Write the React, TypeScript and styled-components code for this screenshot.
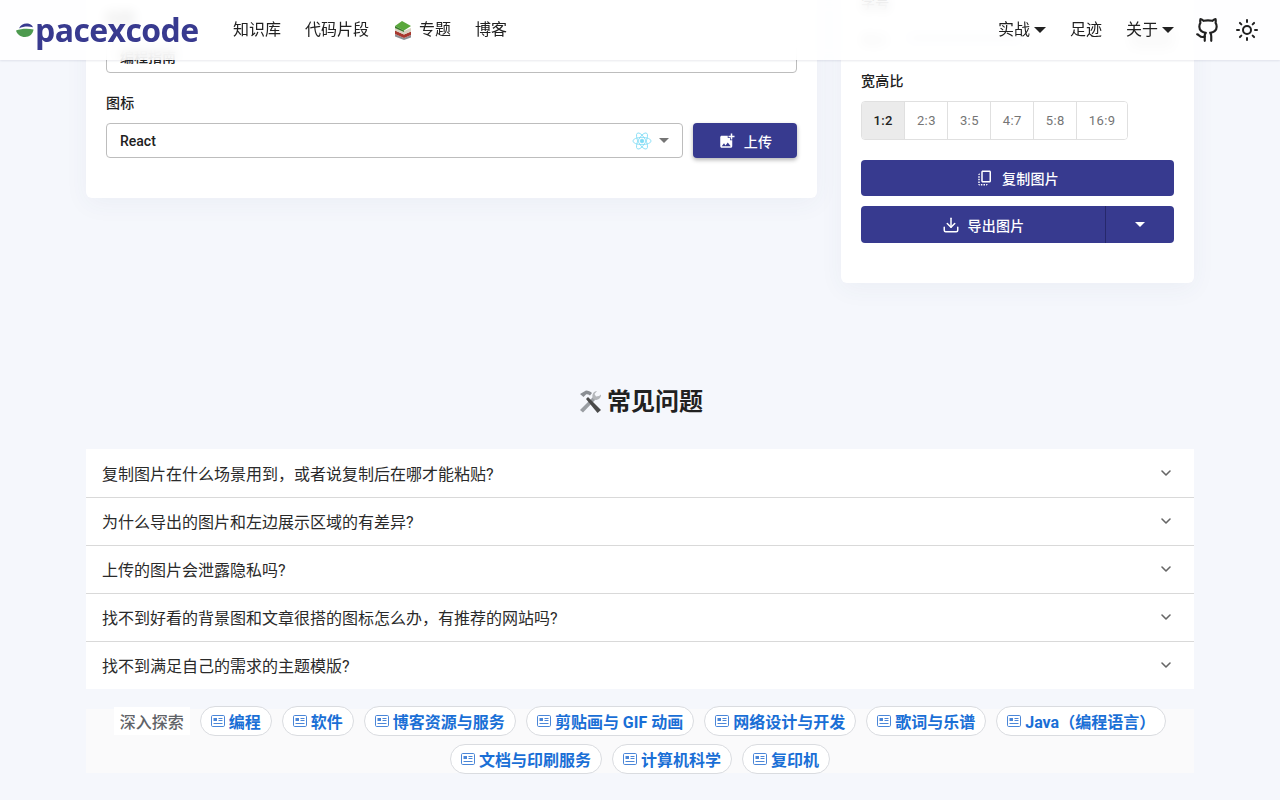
import styled, { createGlobalStyle } from 'styled-components';
import { ChevronDown, Download, Github, Sun } from 'lucide-react';

const FAQ_LIST = [
  '复制图片在什么场景用到，或者说复制后在哪才能粘贴?',
  '为什么导出的图片和左边展示区域的有差异?',
  '上传的图片会泄露隐私吗?',
  '找不到好看的背景图和文章很搭的图标怎么办，有推荐的网站吗?',
  '找不到满足自己的需求的主题模版?',
];
const RATIOS = ['1:2', '2:3', '3:5', '4:7', '5:8', '16:9'];
const TOPICS = [
  '编程',
  '软件',
  '博客资源与服务',
  '剪贴画与 GIF 动画',
  '网络设计与开发',
  '歌词与乐谱',
  'Java（编程语言）',
  '文档与印刷服务',
  '计算机科学',
  '复印机',
];

const GlobalStyle = createGlobalStyle`
  html, body {
    margin: 0;
    height: 800px;
    overflow: hidden;
    background: #f5f7fc;
    color: #212121;
    font-family: Roboto, "Noto Sans CJK SC", sans-serif;
  }
`;

const Caret = styled.i<{ $color?: string; $size?: number }>`
  display: inline-block;
  width: 0;
  height: 0;
  border-left: ${({ $size }) => $size ?? 6}px solid transparent;
  border-right: ${({ $size }) => $size ?? 6}px solid transparent;
  border-top: ${({ $size }) => $size ?? 6}px solid ${({ $color }) => $color ?? '#212121'};
`;

const Header = styled.header`
  position: fixed;
  z-index: 5;
  top: 0;
  left: 0;
  right: 0;
  height: 60px;
  box-sizing: border-box;
  padding: 0 21px 0 16px;
  display: flex;
  align-items: center;
  background: rgba(255, 255, 255, 0.86);
  backdrop-filter: blur(6px);
  box-shadow: 0 1px 2px rgba(30, 40, 80, 0.1);
`;

const Logo = styled.div`
  display: flex;
  align-items: center;
  width: 217px;
  color: #383a8f;
  font-family: 'Open Sans', sans-serif;
  font-weight: 700;
  font-size: 32px;
  letter-spacing: -0.6px;
  line-height: 40px;
  svg {
    margin-right: 1px;
  }
`;

const Nav = styled.nav`
  display: flex;
  align-items: center;
  gap: 24px;
  flex: 1;
`;

const NavItem = styled.a`
  display: flex;
  align-items: center;
  gap: 4px;
  font-size: 16px;
  color: #212121;
  line-height: 24px;
`;

const RightNav = styled.div`
  display: flex;
  align-items: center;
  gap: 24px;
`;

const IconGroup = styled.div`
  display: flex;
  align-items: center;
  gap: 14px;
  margin-left: -3px;
  color: #212121;
`;

const Main = styled.main`
  width: 1108px;
  margin: -20px auto 0;
`;

const Columns = styled.div`
  display: flex;
  align-items: flex-start;
  gap: 24px;
`;

const Card = styled.section<{ $width: number; $top: number }>`
  width: ${({ $width }) => $width}px;
  box-sizing: border-box;
  padding: ${({ $top }) => $top}px 20px 40px;
  background: #fff;
  border-radius: 6px;
  box-shadow: 0 6px 24px rgba(60, 70, 120, 0.05);
`;

const Label = styled.div`
  font-size: 14px;
  font-weight: 500;
  line-height: 20px;
  margin-bottom: 10px;
  letter-spacing: 0.2px;
`;

const Field = styled.div`
  margin-bottom: 20px;
`;

const Input = styled.div`
  height: 35px;
  box-sizing: border-box;
  border: 1px solid #bdbdbd;
  border-radius: 4px;
  padding: 0 13px;
  display: flex;
  align-items: center;
  font-size: 14px;
  font-weight: 500;
`;

const SelectRow = styled.div`
  display: flex;
  gap: 10px;
`;

const Select = styled(Input)`
  flex: 1;
  justify-content: space-between;
  padding-right: 13px;
`;

const SelectEnd = styled.div`
  display: flex;
  align-items: center;
  gap: 7px;
`;

const Button = styled.button<{ $raised?: boolean }>`
  display: flex;
  align-items: center;
  justify-content: center;
  gap: 8px;
  border: 0;
  padding: 0;
  color: #fff;
  background: #373a8f;
  font: 500 14px Roboto, "Noto Sans CJK SC", sans-serif;
  letter-spacing: 0.2px;
  border-radius: 4px;
  box-shadow: ${({ $raised }) => ($raised ? '0 2px 4px rgba(0, 0, 0, 0.3)' : 'none')};
`;

const UploadButton = styled(Button)`
  width: 104px;
  height: 35px;
`;

const SliderRow = styled.div`
  display: flex;
  align-items: center;
  gap: 20px;
  height: 30px;
  margin-bottom: 18px;
  font-size: 13px;
  color: #666;
`;

const SliderTrack = styled.div`
  width: 115px;
  height: 4px;
  background: #c9cbe6;
  border-radius: 2px;
`;

const SliderValue = styled.div`
  margin-left: auto;
  width: 44px;
  height: 22px;
  background: #ddd;
  border-radius: 4px;
`;

const RatioGroup = styled.div`
  display: flex;
  width: fit-content;
  margin-bottom: 20px;
  border: 1px solid #e0e0e0;
  border-radius: 4px;
  overflow: hidden;
`;

const Ratio = styled.div<{ $active?: boolean }>`
  height: 37px;
  padding: 0 11.5px;
  display: flex;
  align-items: center;
  font-size: 13px;
  letter-spacing: 0.4px;
  font-weight: ${({ $active }) => ($active ? 500 : 400)};
  color: ${({ $active }) => ($active ? '#212121' : '#757575')};
  background: ${({ $active }) => ($active ? '#ebebeb' : '#fff')};
  & + & {
    border-left: 1px solid #e0e0e0;
  }
`;

const WideButton = styled(Button)`
  width: 100%;
  height: 36px;
  margin-bottom: 10px;
`;

const SplitButton = styled.div`
  display: flex;
  height: 37px;
  border-radius: 4px;
  overflow: hidden;
`;

const SplitMain = styled(Button)`
  flex: 1;
  border-radius: 0;
  border-right: 1px solid #26286b;
`;

const SplitSide = styled(Button)`
  width: 68px;
  border-radius: 0;
`;

const Title = styled.h2`
  margin: 102px 0 30px;
  height: 34px;
  display: flex;
  align-items: center;
  justify-content: center;
  gap: 4px;
  font-size: 24px;
  line-height: 34px;
  font-weight: 700;
`;

const Faq = styled.div`
  background: #fff;
`;

const FaqRow = styled.div`
  height: 48px;
  box-sizing: border-box;
  padding: 0 20px 1px 16px;
  display: flex;
  align-items: center;
  justify-content: space-between;
  font-size: 16px;
  color: #212121;
  color: #2a2a2a;
  & + & {
    border-top: 1px solid #d9d9d9;
  }
  svg {
    color: #666;
  }
`;

const Explore = styled.div`
  height: 64px;
  margin-top: 20px;
  background: #fafafb;
`;

const ChipWrap = styled.div`
  display: flex;
  flex-wrap: wrap;
  justify-content: center;
  align-items: center;
  gap: 8px 10px;
  position: relative;
  top: -3px;
`;

const ExploreLabel = styled.div`
  height: 28px;
  padding: 0 6px;
  display: flex;
  align-items: center;
  background: #fff;
  font-size: 16px;
  font-weight: 500;
  color: #5f6368;
`;

const Chip = styled.a`
  height: 30px;
  box-sizing: border-box;
  padding: 0 10px;
  display: flex;
  align-items: center;
  gap: 4px;
  background: #fff;
  border: 1px solid #dadce0;
  border-radius: 15px;
  color: #1a6fd6;
  font-size: 16px;
  font-weight: 700;
  white-space: nowrap;
`;

const LogoMark = () => (
  <svg width="18" height="18" viewBox="0 0 18 18">
    <path d="M3 7.5C4.5 3.5 8.5 2 12 2.6c2.4.4 4 1.6 5 3.6C12 5 7 5.500 3 7.500z" fill="#383a8f" />
    <path d="M0 9.500C5 7.500 12 7 17.500 8.500c-.500 4.500-4 7.500-8.500 7.500C4.500 16 1.200 13.500 0 9.500z" fill="#4d9a4f" />
  </svg>
);

const BooksIcon = () => (
  <svg width="20" height="20" viewBox="0 0 20 20">
    <path d="M2 14l9 4 7-3v2.500L11 20l-9-3.500z" fill="#8d8f94" />
    <path d="M2 10.500l9 4 7-3v3.500l-7 3-9-4z" fill="#a8382f" />
    <path d="M2 7l9 4 7-3v3.500l-7 3-9-4z" fill="#d8d2c0" />
    <path d="M2 6l7-5 9 5-7 4.500z" fill="#5aa83c" />
    <path d="M2 6l9 4.500V12L2 8z" fill="#3a7d2c" />
  </svg>
);

const ToolsIcon = () => (
  <svg width="26" height="26" viewBox="0 0 26 26">
    <path d="M6 23.500L3 21 17 7l2.500 2.500z" fill="#9a9ea3" />
    <path d="M24 5.500a5 5 0 0 1-7 5l-1-1A5 5 0 0 1 20 2l-2.500 3 1.500 2.500 3-.5z" fill="#b3b6ba" />
    <path d="M20.500 24L24 21 11 8l-2 2z" fill="#4a4a4a" />
    <path d="M3 5l6-3.500c2.500 0 4.500 1 6 2.500l-2 2.500c-1.500-1-3-1.500-4-1L6.500 8z" fill="#8a8e93" />
  </svg>
);

const ReactLogo = () => (
  <svg width="20" height="20" viewBox="-11 -11 22 22" fill="none" stroke="#7fdcf5" strokeWidth="0.9">
    <circle r="2" fill="#7fdcf5" />
    <ellipse rx="10" ry="4" />
    <ellipse rx="10" ry="4" transform="rotate(60)" />
    <ellipse rx="10" ry="4" transform="rotate(120)" />
  </svg>
);

const AddPhoto = () => (
  <svg width="18" height="18" viewBox="0 0 24 24" fill="#fff">
    <path d="M19 7v2.990s-1.990.010-2 0V7h-3s.010-1.990 0-2h3V2h2v3h3v2h-3zm-3 4V8h-3V5H5c-1.100 0-2 .9-2 2v12c0 1.100.9 2 2 2h12c1.100 0 2-.9 2-2v-8h-3zM5 19l3-4 2 3 3-4 4 5H5z" />
  </svg>
);

const CopyAll = () => (
  <svg width="18" height="18" viewBox="0 0 24 24" fill="#fff">
    <path d="M18 2H9C7.900 2 7 2.900 7 4v12c0 1.100.9 2 2 2h9c1.100 0 2-.9 2-2V4c0-1.100-.9-2-2-2zm0 14H9V4h9v12zM3 15v-2h2v2H3zm0-5.500h2v2H3v-2zM10 20h2v2h-2v-2zm-7-1.500v-2h2v2H3zM5 22c-1.100 0-2-.9-2-2h2v2zm3.500 0h-2v-2h2v2zm5 0v-2h2c0 1.100-.9 2-2 2zM5 6v2H3c0-1.100.9-2 2-2z" />
  </svg>
);

const ArticleIcon = () => (
  <svg width="14" height="12" viewBox="0 0 14 12" fill="none">
    <rect x="0.500" y="0.500" width="13" height="11" rx="1.200" stroke="#4a86d8" />
    <rect x="2.500" y="3" width="3.500" height="3" fill="#4a86d8" />
    <path d="M7.500 3.500h4M7.500 5.500h4M2.500 8.500h9" stroke="#4a86d8" />
  </svg>
);

export default function App() {
  return (
    <>
      <GlobalStyle />
      <Header>
        <Logo>
          <LogoMark />
          pacexcode
        </Logo>
        <Nav>
          <NavItem>知识库</NavItem>
          <NavItem>代码片段</NavItem>
          <NavItem>
            <BooksIcon />
            <span style={{ marginLeft: 2 }}>专题</span>
          </NavItem>
          <NavItem>博客</NavItem>
        </Nav>
        <RightNav>
          <NavItem>
            实战 <Caret />
          </NavItem>
          <NavItem>足迹</NavItem>
          <NavItem>
            关于 <Caret />
          </NavItem>
          <IconGroup>
            <Github size={26} strokeWidth={2} />
            <Sun size={24} strokeWidth={2} />
          </IconGroup>
        </RightNav>
      </Header>
      <Main>
        <Columns>
          <Card $width={731} $top={28}>
            <Field>
              <Label>标题</Label>
              <Input>编程指南</Input>
            </Field>
            <Label>图标</Label>
            <SelectRow>
              <Select>
                React
                <SelectEnd>
                  <ReactLogo />
                  <Caret $color="#757575" $size={5} />
                </SelectEnd>
              </Select>
              <UploadButton $raised>
                <AddPhoto />
                上传
              </UploadButton>
            </SelectRow>
          </Card>
          <Card $width={353} $top={13}>
            <Label>字号</Label>
            <SliderRow>
              大小
              <SliderTrack />
              <SliderValue />
            </SliderRow>
            <Label>宽高比</Label>
            <RatioGroup>
              {RATIOS.map((ratio, i) => (
                <Ratio key={ratio} $active={i === 0}>
                  {ratio}
                </Ratio>
              ))}
            </RatioGroup>
            <WideButton>
              <CopyAll />
              复制图片
            </WideButton>
            <SplitButton>
              <SplitMain>
                <Download size={18} strokeWidth={2} />
                导出图片
              </SplitMain>
              <SplitSide>
                <Caret $color="#fff" $size={5} />
              </SplitSide>
            </SplitButton>
          </Card>
        </Columns>
        <Title>
          <ToolsIcon />
          常见问题
        </Title>
        <Faq>
          {FAQ_LIST.map((q) => (
            <FaqRow key={q}>
              {q}
              <ChevronDown size={16} strokeWidth={2.4} />
            </FaqRow>
          ))}
        </Faq>
        <Explore>
          <ChipWrap>
            <ExploreLabel>深入探索</ExploreLabel>
            {TOPICS.map((topic) => (
              <Chip key={topic}>
                <ArticleIcon />
                {topic}
              </Chip>
            ))}
          </ChipWrap>
        </Explore>
      </Main>
    </>
  );
}
